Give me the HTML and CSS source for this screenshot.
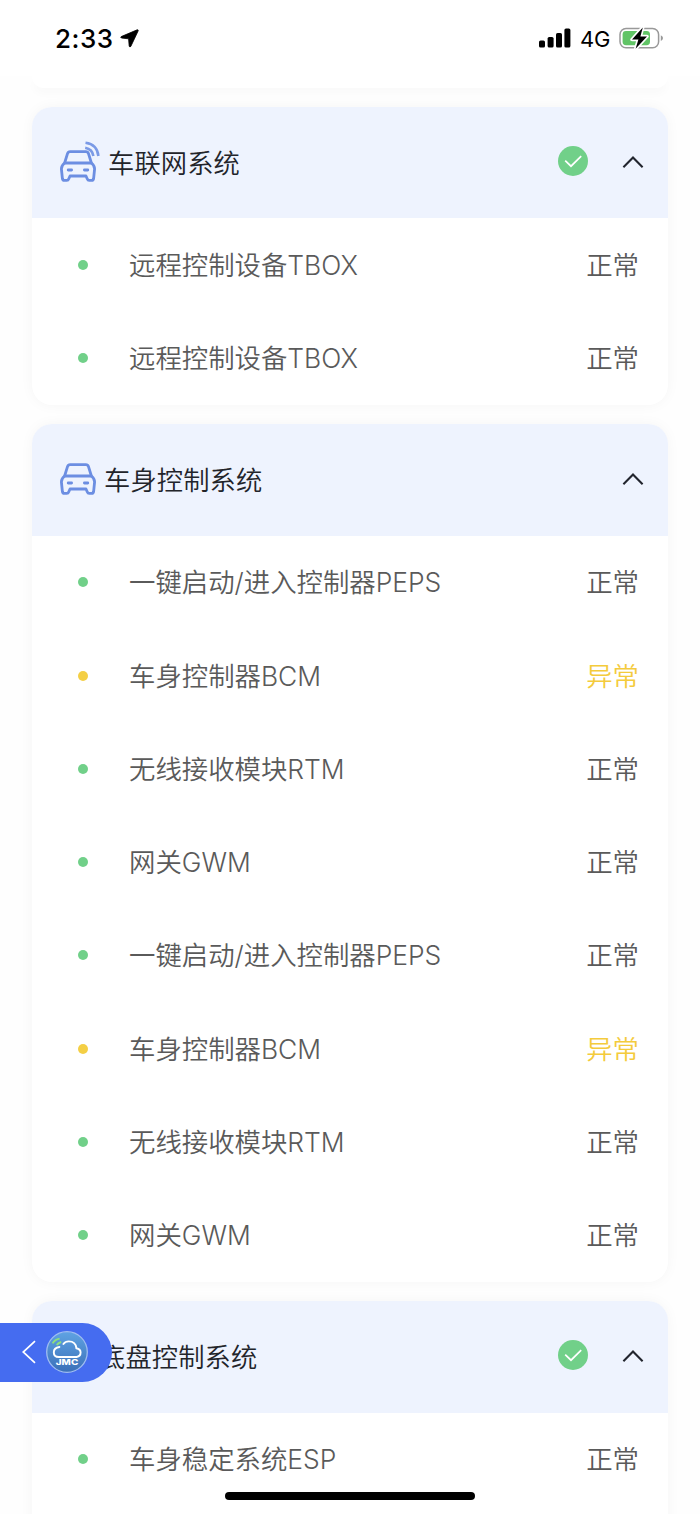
FILE: index.html
```html
<!doctype html>
<html lang="zh-CN">
<head>
<meta charset="utf-8">
<title>车辆检测</title>
<link rel="stylesheet" href="styles.css">
</head>

<body>
	<!--公用图标-->
	<svg class="defs" width="0" height="0">
		<symbol id="car" viewBox="0 0 36 32">
			<g fill="none" stroke="#6c8ee2" stroke-width="2.8" stroke-linejoin="round" stroke-linecap="round">
				<path d="M4.6 13 7.5 3.6Q8.1 1.6 10.2 1.6H25.8Q27.9 1.6 28.5 3.6L31.4 13"/>
				<path d="M5.5 13H30.5"/>
				<path d="M4.6 13Q1.4 15.5 1.4 19L2.4 28.6Q2.8 30.4 4.4 30.4H6.8Q8.2 30.4 8.8 28.8L10 26H26L27.2 28.8Q27.8 30.4 29.2 30.4H31.6Q33.2 30.4 33.6 28.6L34.6 19Q34.6 15.5 31.4 13"/>
				<path d="M8.2 20H11.6M24.4 20H27.8"/>
			</g>
		</symbol>
		<symbol id="check" viewBox="0 0 30 30">
			<circle cx="15" cy="15" r="15" fill="#71d089"/>
			<path d="M7.2 14.6 13 20.2 23.2 10.2" fill="none" stroke="#fff" stroke-width="1.7"/>
		</symbol>
		<symbol id="arrow" viewBox="0 0 22 14">
			<path d="M1.4 12.2 11 2.6 20.6 12.2" fill="none" stroke="#22252e" stroke-width="2.1"/>
		</symbol>
	</svg>

	<div id="box">
		<div class="status">
			<span class="time">2:33</span>
			<svg class="location" width="19" height="19" viewBox="0 0 19 19"><path d="M17.2.8 1.2 7.6Q.2 8.4 1.4 9L8.6 9.8 9.2 17.2Q9.8 18.6 10.8 17.4L18.2 1.8Q18.4.6 17.2.8Z" stroke="#000" stroke-width=".8"/></svg>
			<svg class="signal" width="32" height="20" viewBox="0 0 32 20">
				<rect x="0" y="12.6" width="6" height="7" rx="1.6"/>
				<rect x="8.6" y="9" width="6" height="10.6" rx="1.6"/>
				<rect x="17" y="5" width="6" height="14.6" rx="1.6"/>
				<rect x="25.4" y="0.4" width="6" height="19.2" rx="1.6"/>
			</svg>
			<span class="net">4G</span>
			<svg class="battery" width="46" height="24" viewBox="0 0 46 24">
				<rect x="1" y="2.4" width="38.6" height="19.4" rx="6" fill="#fff" stroke="#999" stroke-width="1.5"/>
				<rect x="3.6" y="5" width="27.4" height="14.2" rx="3.4" fill="#61c466"/>
				<path d="M41.8 9.2Q44 10 44 12.1T41.8 15Z" fill="#999"/>
				<path d="M23.8 1.4 13 13.6H19.4L16.6 22.8 28 10.4H21.4Z" fill="#000" stroke="#fff" stroke-width="3.4" stroke-linejoin="round" paint-order="stroke"/>
			</svg>
		</div>

		<div class="list">
			<div class="card prev"></div>

			<div class="card">
				<div class="title">
					<svg class="icon net_car" width="42" height="42" viewBox="0 0 42 42">
						<use href="#car" x="0" y="9" width="36" height="32"/>
						<path d="M25.5 1.8Q37.2 3.4 38.4 15M25.2 6.8Q32.4 8.2 33.4 15" fill="none" stroke="#7b9ae6" stroke-width="2.6"/>
					</svg>
					<h3>车联网系统</h3>
					<svg class="check" width="30" height="30"><use href="#check"/></svg>
					<svg class="arrow" width="22" height="14"><use href="#arrow"/></svg>
				</div>
				<ul>
					<li><i></i><span>远程控制设备TBOX</span><em>正常</em></li>
					<li><i></i><span>远程控制设备TBOX</span><em>正常</em></li>
				</ul>
			</div>

			<div class="card">
				<div class="title">
					<svg class="icon" width="36" height="32"><use href="#car"/></svg>
					<h3>车身控制系统</h3>
					<svg class="arrow" width="22" height="14"><use href="#arrow"/></svg>
				</div>
				<ul>
					<li><i></i><span>一键启动/进入控制器PEPS</span><em>正常</em></li>
					<li class="error"><i></i><span>车身控制器BCM</span><em>异常</em></li>
					<li><i></i><span>无线接收模块RTM</span><em>正常</em></li>
					<li><i></i><span>网关GWM</span><em>正常</em></li>
					<li><i></i><span>一键启动/进入控制器PEPS</span><em>正常</em></li>
					<li class="error"><i></i><span>车身控制器BCM</span><em>异常</em></li>
					<li><i></i><span>无线接收模块RTM</span><em>正常</em></li>
					<li><i></i><span>网关GWM</span><em>正常</em></li>
				</ul>
			</div>

			<div class="card last">
				<div class="title">
					<h3 class="no_icon">底盘控制系统</h3>
					<svg class="check" width="30" height="30"><use href="#check"/></svg>
					<svg class="arrow" width="22" height="14"><use href="#arrow"/></svg>
				</div>
				<ul>
					<li><i></i><span>车身稳定系统ESP</span><em>正常</em></li>
				</ul>
			</div>
		</div>

		<!--左侧悬浮返回按钮-->
		<div class="back">
			<svg width="14" height="24" viewBox="0 0 14 24"><path d="M13 1.2 1.2 12 13 22.8" fill="none" stroke="#fff" stroke-width="1.7"/></svg>
			<svg class="logo" width="42" height="42" viewBox="0 0 42 42">
				<defs>
					<linearGradient id="sky" x1="0" y1="0" x2="0" y2="1">
						<stop offset="0" stop-color="#5fa3e3"/>
						<stop offset="1" stop-color="#3b70b8"/>
					</linearGradient>
				</defs>
				<circle cx="21" cy="21" r="20.3" fill="url(#sky)" stroke="#9fbdf0" stroke-width="1.3"/>
				<path d="M13.4 16Q7.8 16.8 7.8 21.2 7.8 26 12.8 26H30.6Q34.6 25.4 34.6 21.6 34.6 18 30.4 17.2 29.6 10.4 22.8 10.4 19.2 10.4 17.4 13" fill="none" stroke="#fff" stroke-width="1.9" stroke-linecap="round"/>
				<path d="M6.6 12.4Q8.8 8.4 13.6 7.6M10.8 14Q12.4 11.6 15.2 11" fill="none" stroke="#8fe07a" stroke-width="1.9"/>
				<text x="9.8" y="34.2" textLength="22.4" lengthAdjust="spacingAndGlyphs">JMC</text>
			</svg>
		</div>
		<div class="home"></div>
	</div>
</body>
</html>
```

FILE: styles.css
```css
	*{
		padding: 0;
		margin: 0;
		list-style: none;
		text-decoration: none;
		box-sizing: border-box;
	}
	body{
		background-color: #fefefe;
		font-family: Inter, "Noto Sans CJK SC", sans-serif;
	}
	svg{
		display: block;
		flex: none;
	}
	.defs{
		position: absolute;
	}
	#box{
		width: 700px;
		height: 1514px;
		position: relative;
		overflow: hidden;
	}

	/*状态栏*/
	.status{
		height: 76px;
		padding-left: 55px;
		padding-right: 35px;
		display: flex;
		align-items: center;
		background-color: #fff;
		color: #000;
	}
	.status .time{
		width: 59px;
		font-size: 26px;
		font-weight: 500;
		letter-spacing: 0.5px;
	}
	.status .location{
		margin-left: 6px;
	}
	.status .signal{
		margin-left: auto;
	}
	.status .net{
		width: 30px;
		margin: 2px 9px 0 9px;
		font-size: 22px;
		letter-spacing: -0.3px;
	}

	/*系统卡片*/
	.list{
		padding: 0 32px;
	}
	.card{
		margin-bottom: 19.5px;
		border-radius: 20px;
		background-color: #fff;
		box-shadow: 0 0 14px rgba(0,0,0,0.04);
		overflow: hidden;
	}
	.card.prev{
		height: 12px;
		margin-bottom: 19px;
		border-radius: 0 0 20px 20px;
		box-shadow: 0 6px 8px rgba(0,0,0,0.02);
	}
	.card.last{
		height: 240px;
		margin-bottom: 0;
	}
	.card .title{
		height: 111.4px;
		padding: 0 24px 2px 28px;
		display: flex;
		align-items: center;
		background-color: #eef3fe;
	}
	.card h3{
		margin-left: 8px;
		margin-right: auto;
		padding-top: 4px;
		font-size: 26.3px;
		font-weight: 350;
		line-height: 38px;
		letter-spacing: 0.1px;
		color: #22242a;
	}
	.card .net_car{
		margin-right: -2px;
	}
	.card .no_icon{
		margin-left: 39px;
	}
	.card .check{
		margin-top: -1px;
	}
	.card .arrow{
		margin-left: 34px;
	}
	.card li{
		height: 93.25px;
		padding: 0 29px 0 46px;
		display: flex;
		align-items: center;
		font-size: 26.4px;
		font-weight: 350;
		line-height: 38px;
		color: #5a5a5a;
	}
	.card li i{
		width: 10px;
		height: 10px;
		margin-right: 41px;
		border-radius: 50%;
		background-color: #71d089;
	}
	.card li em{
		margin-left: auto;
		font-style: normal;
	}
	.card .error i{
		background-color: #f4cf45;
	}
	.card .error em{
		color: #f4cb3c;
	}

	/*悬浮返回*/
	.back{
		width: 112px;
		height: 59px;
		padding-left: 22px;
		padding-bottom: 2px;
		position: absolute;
		left: 0;
		top: 1323px;
		display: flex;
		align-items: center;
		background-color: #456cf0;
		border-radius: 0 30px 30px 0;
	}
	.back .logo{
		margin-left: 10px;
	}
	.back text{
		font-size: 8px;
		font-weight: 800;
		fill: #fff;
	}
	.home{
		width: 250px;
		height: 8px;
		position: absolute;
		left: 225px;
		bottom: 14px;
		border-radius: 4px;
		background-color: #000;
	}
```
